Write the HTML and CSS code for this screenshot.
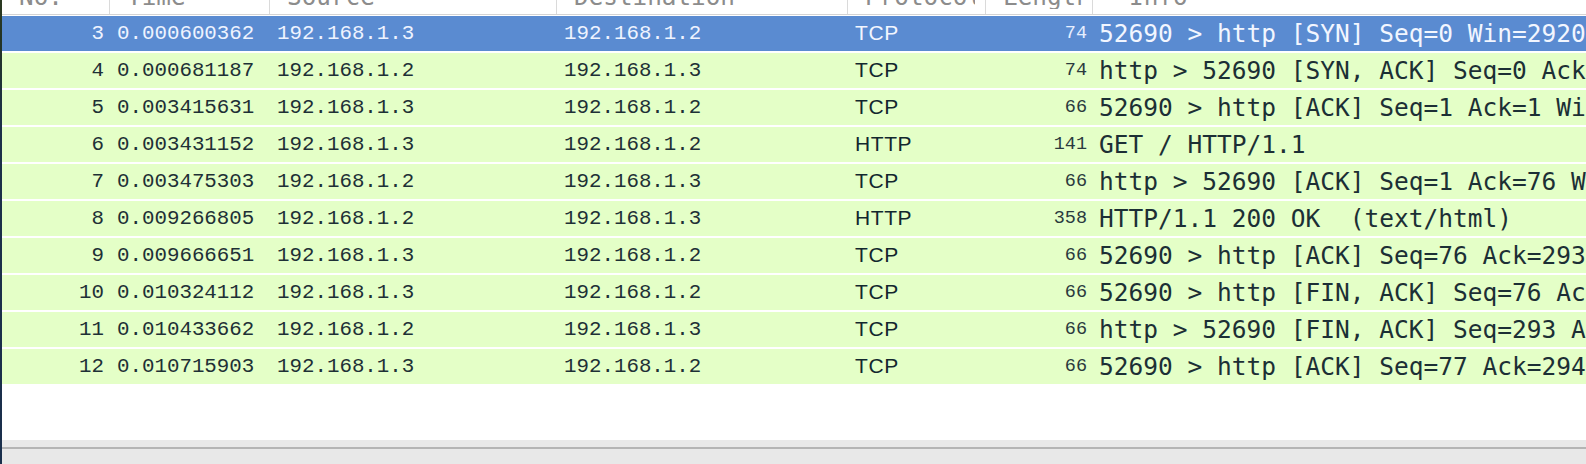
FILE: index.html
```html
<!DOCTYPE html>
<html>
<head>
<meta charset="utf-8">
<link rel="stylesheet" href="styles.css">
</head>
<body>
<div class="frame">
  <div class="strip"></div>
  <div class="pane">
    <div class="list">
      <div class="head">
        <div class="hc"><span class="ht">No.</span></div>
        <div class="hc"><span class="ht">Time</span></div>
        <div class="hc"><span class="ht">Source</span></div>
        <div class="hc"><span class="ht">Destination</span></div>
        <div class="hc"><span class="ht">Protocol</span></div>
        <div class="hc"><span class="ht">Length</span></div>
        <div class="hc last"><span class="ht">Info</span></div>
      </div>
      <div class="rows">
        <div class="row sel"><span class="c no">3</span><span class="c t">0.000600362</span><span class="c ip">192.168.1.3</span><span class="c ip">192.168.1.2</span><span class="c pr">TCP</span><span class="c len">74</span><span class="c info">52690 &gt; http [SYN] Seq=0 Win=29200 Len=0 MSS=1460 SACK_PERM=1 TSval=1234</span></div>
        <div class="row"><span class="c no">4</span><span class="c t">0.000681187</span><span class="c ip">192.168.1.2</span><span class="c ip">192.168.1.3</span><span class="c pr">TCP</span><span class="c len">74</span><span class="c info">http &gt; 52690 [SYN, ACK] Seq=0 Ack=1 Win=28960 Len=0 MSS=1460</span></div>
        <div class="row"><span class="c no">5</span><span class="c t">0.003415631</span><span class="c ip">192.168.1.3</span><span class="c ip">192.168.1.2</span><span class="c pr">TCP</span><span class="c len">66</span><span class="c info">52690 &gt; http [ACK] Seq=1 Ack=1 Win=29312 Len=0 TSval=1234</span></div>
        <div class="row"><span class="c no">6</span><span class="c t">0.003431152</span><span class="c ip">192.168.1.3</span><span class="c ip">192.168.1.2</span><span class="c pr">HTTP</span><span class="c len">141</span><span class="c info">GET / HTTP/1.1</span></div>
        <div class="row"><span class="c no">7</span><span class="c t">0.003475303</span><span class="c ip">192.168.1.2</span><span class="c ip">192.168.1.3</span><span class="c pr">TCP</span><span class="c len">66</span><span class="c info">http &gt; 52690 [ACK] Seq=1 Ack=76 Win=29056 Len=0 TSval=1234</span></div>
        <div class="row"><span class="c no">8</span><span class="c t">0.009266805</span><span class="c ip">192.168.1.2</span><span class="c ip">192.168.1.3</span><span class="c pr">HTTP</span><span class="c len">358</span><span class="c info">HTTP/1.1 200 OK  (text/html)</span></div>
        <div class="row"><span class="c no">9</span><span class="c t">0.009666651</span><span class="c ip">192.168.1.3</span><span class="c ip">192.168.1.2</span><span class="c pr">TCP</span><span class="c len">66</span><span class="c info">52690 &gt; http [ACK] Seq=76 Ack=293 Win=30336 Len=0 TSval=1234</span></div>
        <div class="row"><span class="c no">10</span><span class="c t">0.010324112</span><span class="c ip">192.168.1.3</span><span class="c ip">192.168.1.2</span><span class="c pr">TCP</span><span class="c len">66</span><span class="c info">52690 &gt; http [FIN, ACK] Seq=76 Ack=293 Win=30336 Len=0</span></div>
        <div class="row"><span class="c no">11</span><span class="c t">0.010433662</span><span class="c ip">192.168.1.2</span><span class="c ip">192.168.1.3</span><span class="c pr">TCP</span><span class="c len">66</span><span class="c info">http &gt; 52690 [FIN, ACK] Seq=293 Ack=77 Win=29056 Len=0</span></div>
        <div class="row"><span class="c no">12</span><span class="c t">0.010715903</span><span class="c ip">192.168.1.3</span><span class="c ip">192.168.1.2</span><span class="c pr">TCP</span><span class="c len">66</span><span class="c info">52690 &gt; http [ACK] Seq=77 Ack=294 Win=30336 Len=0 TSval=1234</span></div>
      </div>
      <div class="empty"></div>
    </div>
    <div class="hbar"><div class="hbar-line"></div></div>
  </div>
</div>
</body>
</html>
```
FILE: styles.css
```css
html, body {
  margin: 0;
  padding: 0;
  background: #ffffff;
}
body {
  width: 1586px;
  height: 464px;
  overflow: hidden;
}
.frame {
  display: flex;
  height: 464px;
}
.strip {
  width: 2px;
  flex: none;
  background: linear-gradient(#2b3a22 0, #243424 40px, #1c3048 120px, #1a2f4c 100%);
}
.pane {
  flex: 1;
  display: flex;
  flex-direction: column;
  min-width: 0;
  overflow: hidden;
}
.list {
  flex: 1;
  display: flex;
  flex-direction: column;
  background: #ffffff;
  overflow: hidden;
}
.head, .row {
  display: grid;
  grid-template-columns: 108px 160px 287px 291px 138px 107px 1fr;
}
.head {
  height: 14px;
  border-bottom: 1px solid #d4d4d4;
  overflow: hidden;
  background: #ffffff;
}
.hc {
  border-right: 1px solid #dadada;
  padding-left: 17px;
  padding-right: 10px;
  overflow: hidden;
}
.ht {
  display: block;
  margin-top: -15px;
  font-family: "DejaVu Sans Mono", monospace;
  font-size: 24.3px;
  line-height: 24px;
  color: #8c8c8c;
  white-space: nowrap;
  overflow: hidden;
}
.hc.last {
  border-right: none;
  padding-left: 36px;
}
.rows {
  display: flex;
  flex-direction: column;
  gap: 2.5px;
  padding-top: 1px;
}
.row {
  height: 34.5px;
  align-items: center;
  background: #e4ffc7;
  color: #12272e;
  white-space: nowrap;
}
.row.sel {
  background: #5a8bd1;
  color: #f2f6ff;
}
.c {
  overflow: hidden;
  padding-left: 7px;
}
.no, .t, .ip {
  font-family: "Liberation Mono", monospace;
  font-size: 20.8px;
  color: #1e3036;
}
.sel .no, .sel .t, .sel .ip { color: #eef3ff; }
.no {
  text-align: right;
  padding-left: 0;
  padding-right: 6px;
}
.pr {
  font-family: "Liberation Sans", sans-serif;
  font-size: 21px;
  letter-spacing: 0.6px;
}
.len {
  font-family: "Liberation Mono", monospace;
  font-size: 18.5px;
  text-align: right;
  padding-left: 0;
  padding-right: 6px;
  color: #2a3a3e;
}
.sel .len { color: #e6eeff; }
.info {
  font-family: "DejaVu Sans Mono", monospace;
  font-size: 24.5px;
  padding-left: 6px;
  white-space: pre;
  color: #1c2f35;
}
.sel .info { color: #f2f6ff; }
.empty {
  flex: 1;
}
.hbar {
  height: 17px;
  flex: none;
  background: #e8e8e8;
  display: flex;
  flex-direction: column;
  padding-top: 7px;
}
.hbar-line {
  height: 2px;
  background: #b4b4b4;
}
```
